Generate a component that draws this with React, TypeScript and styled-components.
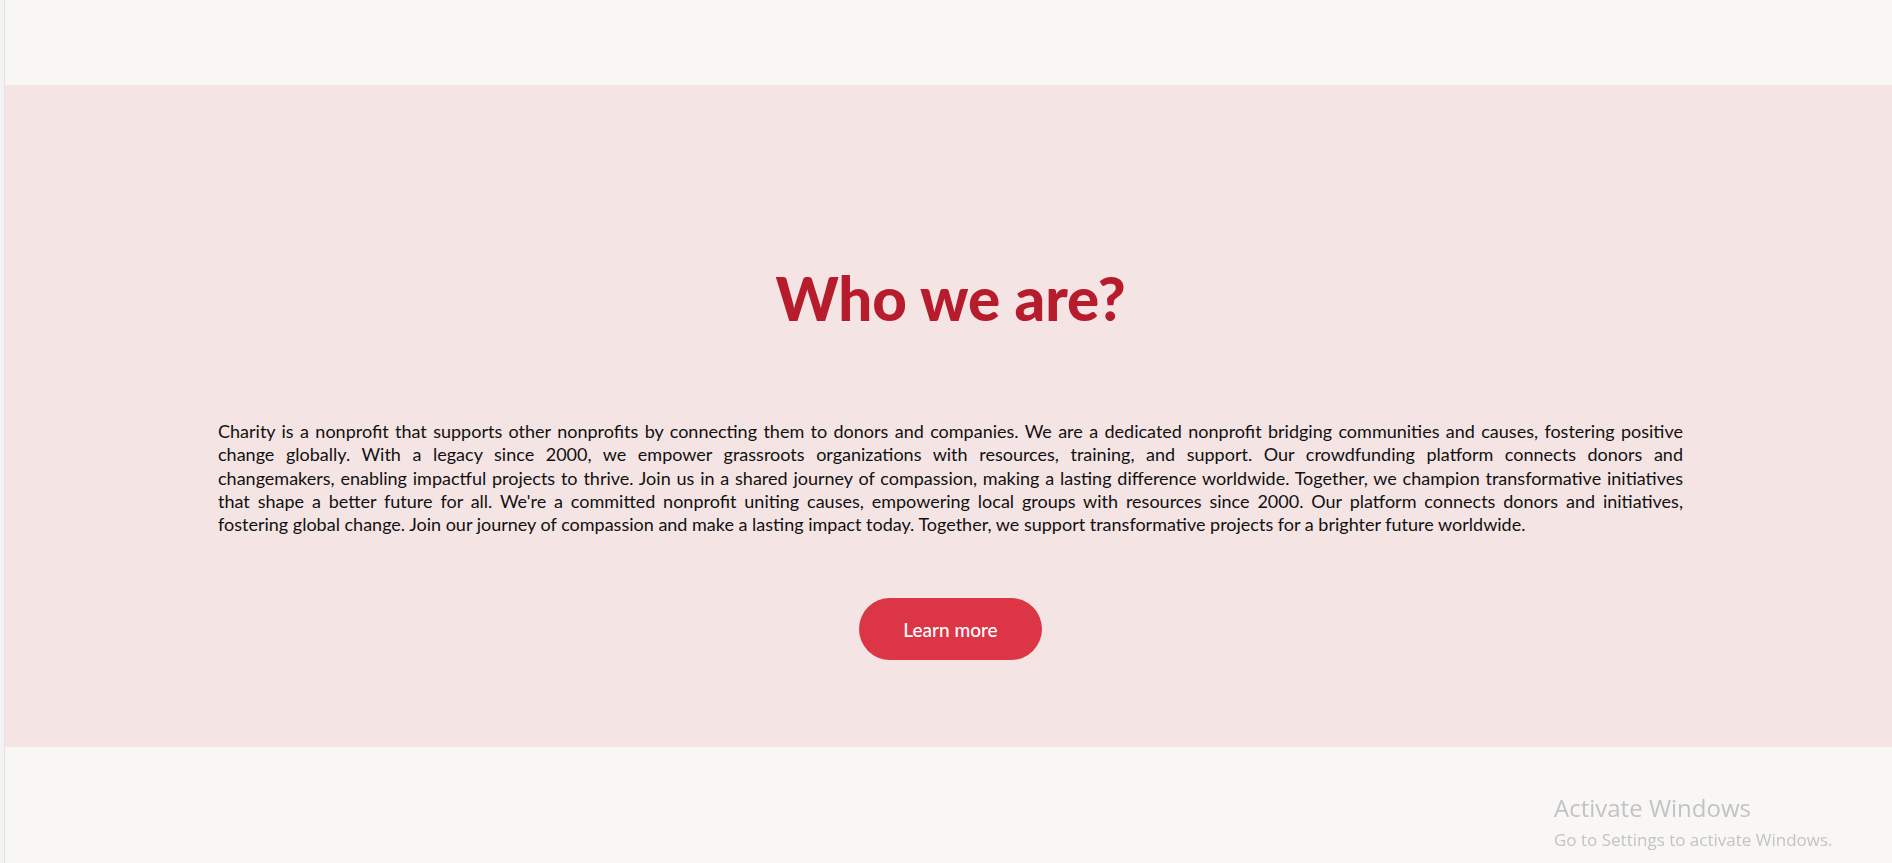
import React from "react";
import styled, { createGlobalStyle } from "styled-components";

const Global = createGlobalStyle`
  html, body { margin: 0; padding: 0; }
  body {
    background: #f3f3f3;
    font-family: "Lato", "Noto Sans", sans-serif;
    overflow: hidden;
  }
`;

const Page = styled.div`
  margin-left: 4px;
  border-left: 1px solid #e4e4e4;
  background: #f8f7f5;
  min-height: 863px;
  display: flex;
  flex-direction: column;
`;

const TopBar = styled.div`
  height: 85px;
`;

const Section = styled.section`
  background: #f5e4e4;
  height: 662px;
  box-sizing: border-box;
  padding: 178px 209px 0 213px;
  display: flex;
  flex-direction: column;
  align-items: center;
`;

const Heading = styled.h2`
  margin: 0;
  font-family: "Lato", sans-serif;
  font-weight: 900;
  font-size: 60px;
  line-height: 70px;
  color: #b71c2c;
`;

const Text = styled.p`
  margin: 87px 0 0;
  align-self: stretch;
  font-family: "Lato", sans-serif;
  font-size: 18px;
  line-height: 23.3px;
  color: #111;
`;

const Line = styled.span<{ $last?: boolean }>`
  display: block;
  text-align: justify;
  text-align-last: ${(p) => (p.$last ? "left" : "justify")};
  white-space: nowrap;
`;

const Button = styled.button`
  margin-top: 62px;
  width: 183px;
  height: 62px;
  border: none;
  border-radius: 31px;
  background: #dc3545;
  color: #fff;
  font-family: "Lato", sans-serif;
  font-size: 19px;
  font-weight: 500;
  cursor: pointer;
`;

const Watermark = styled.div`
  position: fixed;
  left: 1554px;
  top: 793px;
  font-family: "Open Sans", "Noto Sans", sans-serif;
  color: #c3c3c3;
  pointer-events: none;
`;

const WmTitle = styled.div`
  font-size: 24px;
  line-height: 30px;
`;

const WmSub = styled.div`
  font-size: 17px;
  line-height: 22px;
  margin-top: 6px;
`;

const lines = [
  "Charity is a nonprofit that supports other nonprofits by connecting them to donors and companies. We are a dedicated nonprofit bridging communities and causes, fostering positive",
  "change globally. With a legacy since 2000, we empower grassroots organizations with resources, training, and support. Our crowdfunding platform connects donors and",
  "changemakers, enabling impactful projects to thrive. Join us in a shared journey of compassion, making a lasting difference worldwide. Together, we champion transformative initiatives",
  "that shape a better future for all. We're a committed nonprofit uniting causes, empowering local groups with resources since 2000. Our platform connects donors and initiatives,",
  "fostering global change. Join our journey of compassion and make a lasting impact today. Together, we support transformative projects for a brighter future worldwide.",
];

export default function App() {
  return (
    <>
      <Global />
      <Page>
        <TopBar />
        <Section>
          <Heading>Who we are?</Heading>
          <Text>
            {lines.map((l, i) => (
              <Line key={i} $last={i === lines.length - 1}>
                {l}
              </Line>
            ))}
          </Text>
          <Button>Learn more</Button>
        </Section>
      </Page>
      <Watermark>
        <WmTitle>Activate Windows</WmTitle>
        <WmSub>Go to Settings to activate Windows.</WmSub>
      </Watermark>
    </>
  );
}
